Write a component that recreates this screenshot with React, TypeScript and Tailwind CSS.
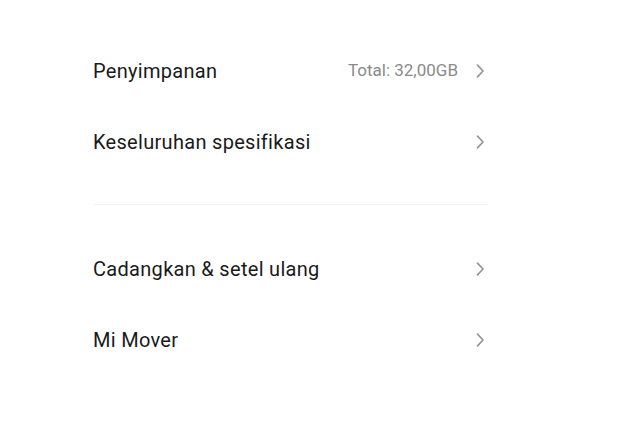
const groups = [
  [
    { label: 'Penyimpanan', value: 'Total: 32,00GB' },
    { label: 'Keseluruhan spesifikasi' },
  ],
  [
    { label: 'Cadangkan & setel ulang' },
    { label: 'Mi Mover' },
  ],
];

function Chevron() {
  return (
    <svg width="9" height="14" viewBox="0 0 9 14" fill="none" className="shrink-0">
      <path d="M1.5 1.2 L7 7 L1.5 12.8" stroke="#959595" strokeWidth="1.7" strokeLinecap="round" strokeLinejoin="round" />
    </svg>
  );
}

type Item = { label: string; value?: string };

function Row({ item }: { item: Item }) {
  return (
    <div className="h-[71px] flex items-center justify-between">
      <span className="text-[20px] text-[#1a1a1a] tracking-[0.3px]">{item.label}</span>
      <div className="flex items-center gap-[18px] pr-[2px]">
        {item.value && <span className="text-[17px] text-[#8a8a8a]">{item.value}</span>}
        <Chevron />
      </div>
    </div>
  );
}

export default function App() {
  return (
    <div className="w-[627px] h-[445px] bg-white font-['Roboto',sans-serif]">
      <div className="ml-[93px] w-[394px] pt-[35px]">
        <div>
          {groups[0].map((item) => (
            <Row key={item.label} item={item} />
          ))}
        </div>
        <div className="mt-[27px] mb-[28px] h-px bg-[#f3f3f3]" />
        <div>
          {groups[1].map((item) => (
            <Row key={item.label} item={item} />
          ))}
        </div>
      </div>
    </div>
  );
}
